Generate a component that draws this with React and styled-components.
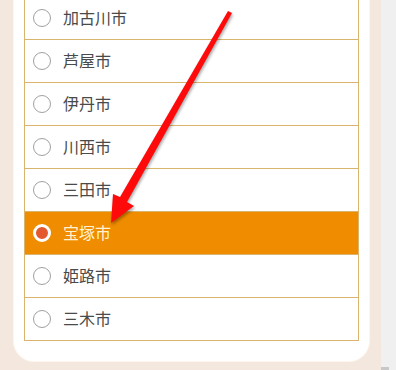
import React from "react";
import styled, { createGlobalStyle } from "styled-components";

const Global = createGlobalStyle`
  html, body { margin: 0; padding: 0; }
  body {
    width: 396px;
    height: 370px;
    overflow: hidden;
    background: #f0efef;
    font-family: "Noto Sans CJK JP", "Noto Sans", sans-serif;
  }
`;

const Page = styled.div`
  position: relative;
  display: flex;
  width: 396px;
  height: 370px;
  overflow: hidden;
`;

const Main = styled.div`
  width: 381px;
  height: 370px;
  background: #f4e7de;
  padding-left: 14px;
  box-sizing: border-box;
`;

const ScrollStrip = styled.div`
  flex: 1;
  background: #f0f0f0;
  display: flex;
  flex-direction: column;
  justify-content: flex-end;
`;

const ScrollThumb = styled.div`
  width: 8px;
  height: 3px;
  background: #c8c8c8;
`;

const Card = styled.div`
  width: 355px;
  background: #ffffff;
  border-radius: 0 0 20px 20px;
  box-shadow: 0 0 0 1px #fdf6ee;
  padding: 0 10px 20px;
  box-sizing: border-box;
`;

const List = styled.ul`
  list-style: none;
  margin: -4px 0 0;
  padding: 0;
  border: 1px solid #d8b46c;
  border-bottom: none;
`;

const Row = styled.li`
  display: flex;
  align-items: center;
  gap: 12px;
  height: 42px;
  padding-left: 8px;
  border-bottom: 1px solid #d8b46c;
  background: ${(p) => (p.$selected ? "#ef8c00" : "#ffffff")};
  color: ${(p) => (p.$selected ? "#fff3d2" : "#4a4a4a")};
  font-size: 16px;
`;

const Radio = styled.span`
  width: 18px;
  height: 18px;
  box-sizing: border-box;
  border-radius: 50%;
  flex: none;
  border: ${(p) => (p.$selected ? "3px solid #ffffff" : "1.5px solid #a0a0a0")};
  background: ${(p) => (p.$selected ? "#e3582c" : "#ffffff")};
`;

const Label = styled.span`
  line-height: 1;
  padding-bottom: 3px;
`;

const Arrow = styled.svg`
  position: absolute;
  left: 0;
  top: 0;
  pointer-events: none;
  filter: drop-shadow(1px 2px 1.5px rgba(0, 0, 0, 0.35));
`;

const cities = [
  "加古川市",
  "芦屋市",
  "伊丹市",
  "川西市",
  "三田市",
  "宝塚市",
  "姫路市",
  "三木市",
];

export default function App() {
  return (
    <>
      <Global />
      <Page>
        <Main>
          <Card>
            <List>
              {cities.map((c) => {
                const sel = c === "宝塚市";
                return (
                  <Row key={c} $selected={sel}>
                    <Radio $selected={sel} />
                    <Label>{c}</Label>
                  </Row>
                );
              })}
            </List>
          </Card>
        </Main>
        <ScrollStrip>
          <ScrollThumb />
        </ScrollStrip>
        <Arrow width="396" height="370" viewBox="0 0 396 370">
          <polygon
            points="228,11 232,13 127,202 134,206 111,223 113,194 120,197"
            fill="#ff0a0a"
          />
        </Arrow>
      </Page>
    </>
  );
}
